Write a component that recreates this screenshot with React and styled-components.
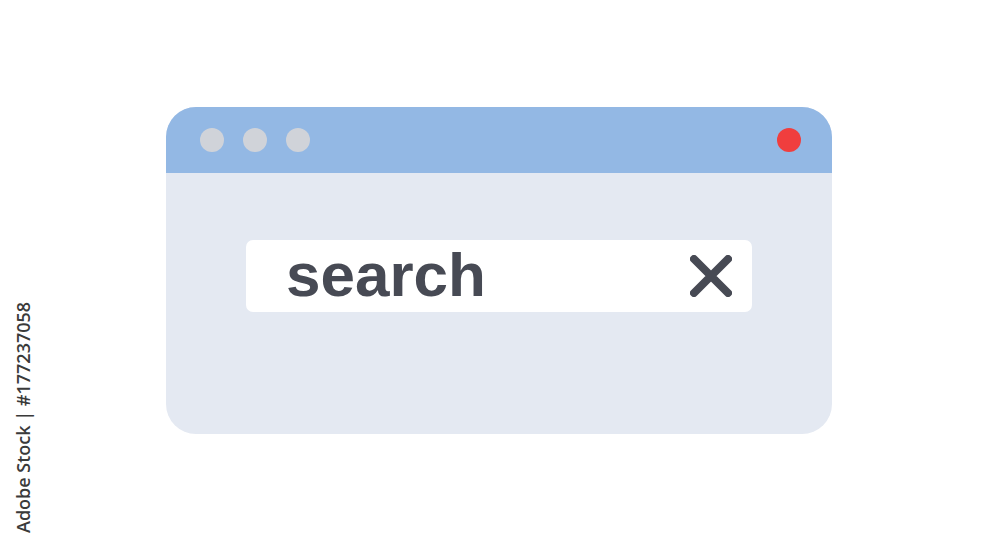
import styled, { createGlobalStyle } from "styled-components";

const GlobalStyle = createGlobalStyle`
  html, body {
    margin: 0;
    padding: 0;
    background: #ffffff;
  }
`;

const Page = styled.div`
  position: relative;
  width: 1000px;
  height: 545px;
  padding-top: 107px;
  padding-left: 166px;
  box-sizing: border-box;
  overflow: hidden;
`;

const Window = styled.div`
  width: 666px;
  height: 327px;
  border-radius: 30px;
  overflow: hidden;
  background: #e4e9f2;
  display: flex;
  flex-direction: column;
`;

const TitleBar = styled.div`
  height: 66px;
  background: #93b8e4;
  display: flex;
  align-items: center;
  padding: 0 31px 0 34px;
  gap: 19px;
  flex-shrink: 0;
`;

const Dot = styled.span`
  width: 24px;
  height: 24px;
  border-radius: 50%;
  background: ${(p) => p.$color || "#d0d3d9"};
  margin-left: ${(p) => (p.$pushRight ? "auto" : "0")};
`;

const Content = styled.div`
  flex: 1;
  padding: 67px 0 0 80px;
`;

const SearchBox = styled.div`
  width: 506px;
  height: 72px;
  box-sizing: border-box;
  background: #ffffff;
  border-radius: 7px;
  display: flex;
  align-items: center;
  padding: 0 20px 0 40px;
`;

const SearchText = styled.span`
  flex: 1;
  font-family: "Liberation Sans", Arial, sans-serif;
  font-weight: 700;
  font-size: 62px;
  line-height: 1;
  color: #474a54;
  margin-top: -3px;
`;

const ClearIcon = styled.svg`
  width: 42px;
  height: 42px;
  display: block;
`;

const Credit = styled.div`
  position: absolute;
  left: 13px;
  top: 533px;
  transform: rotate(-90deg);
  transform-origin: 0 0;
  white-space: nowrap;
  font-family: "Open Sans", "DejaVu Sans", sans-serif;
  font-size: 18px;
  font-weight: 600;
  color: #3a3a3a;
  line-height: 21px;
`;

export default function App() {
  return (
    <>
      <GlobalStyle />
      <Page>
        <Window>
          <TitleBar>
            <Dot />
            <Dot />
            <Dot />
            <Dot $color="#f03e3e" $pushRight />
          </TitleBar>
          <Content>
            <SearchBox>
              <SearchText>search</SearchText>
              <ClearIcon viewBox="0 0 42 42">
                <path
                  d="M4 4 L38 38 M38 4 L4 38"
                  stroke="#474a54"
                  strokeWidth="8"
                  strokeLinecap="round"
                />
              </ClearIcon>
            </SearchBox>
          </Content>
        </Window>
        <Credit>Adobe Stock | #177237058</Credit>
      </Page>
    </>
  );
}
